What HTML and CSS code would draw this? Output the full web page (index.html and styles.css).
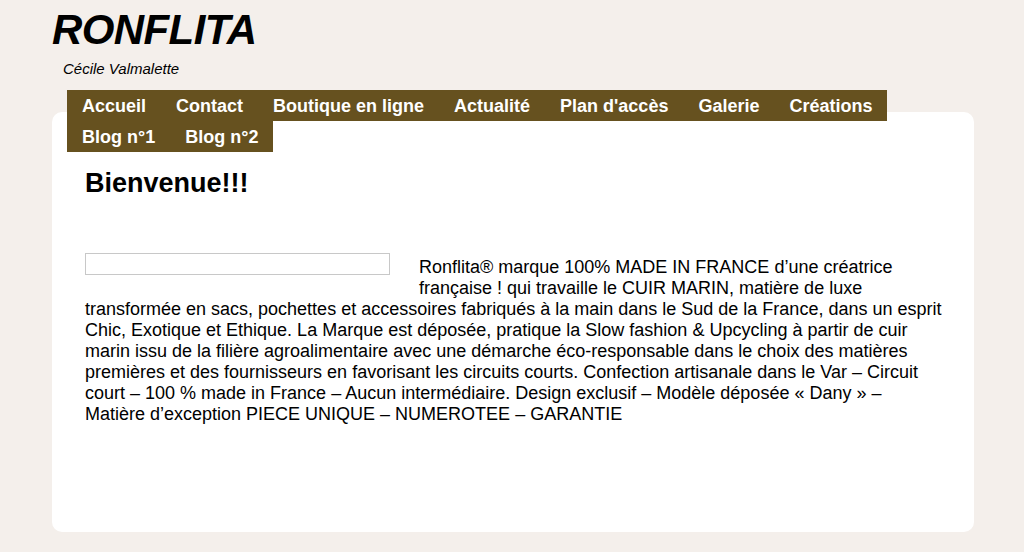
FILE: index.html
```html
<!DOCTYPE html>
<html lang="fr">
<head>
    <meta charset="UTF-8">
    <meta name="viewport" content="width=device-width, initial-scale=1.0">
    <title>Ronflita - Cécile Valmalette</title>
    <link rel="stylesheet" href="styles.css">
</head>
<body>

<div class="page">
    <header class="site-header">
        <h1 class="site-title">RONFLITA</h1>
        <p class="site-tagline">Cécile Valmalette</p>
    </header>

    <div class="card">
        <ul class="nav">
            <li><a href="#">Accueil</a></li>
            <li><a href="#">Contact</a></li>
            <li><a href="#">Boutique en ligne</a></li>
            <li><a href="#">Actualité</a></li>
            <li><a href="#">Plan d'accès</a></li>
            <li><a href="#">Galerie</a></li>
            <li><a href="#">Créations</a></li>
            <li><a href="#">Blog n°1</a></li>
            <li><a href="#">Blog n°2</a></li>
        </ul>

        <h2 class="page-title">Bienvenue!!!</h2>

        <div class="intro">
            <div class="photo"></div>
            <p>Ronflita® marque 100% MADE IN FRANCE d’une créatrice française ! qui travaille le CUIR MARIN, matière de luxe transformée en sacs, pochettes et accessoires fabriqués à la main dans le Sud de la France, dans un esprit Chic, Exotique et Ethique. La Marque est déposée, pratique la Slow fashion &amp; Upcycling à partir de cuir marin issu de la filière agroalimentaire avec une démarche éco-responsable dans le choix des matières premières et des fournisseurs en favorisant les circuits courts. Confection artisanale dans le Var – Circuit court – 100 % made in France – Aucun intermédiaire. Design exclusif – Modèle déposée « Dany » – Matière d’exception PIECE UNIQUE – NUMEROTEE – GARANTIE</p>
        </div>
    </div>
</div>

</body>
</html>
```

FILE: styles.css
```css
body {
    font-family: "Liberation Sans", Arial, sans-serif;
    margin: 0;
    padding: 0;
    background-color: #f4efeb;
    color: #000;
}

.page {
    width: 922px;
    margin: 0 0 0 52px;
    padding-bottom: 21px;
}

.site-header {
    padding-top: 6px;
}

.site-title {
    margin: 0;
    font-size: 42px;
    line-height: 48px;
    font-style: italic;
    font-weight: bold;
    letter-spacing: -0.6px;
}

.site-tagline {
    margin: 6px 0 0 11px;
    font-size: 15px;
    line-height: 17px;
    font-style: italic;
}

.card {
    background: white;
    border-radius: 10px;
    margin-top: 35px;
    padding: 0 28px 107px 33px;
}

.nav {
    list-style: none;
    margin: 0 -18px;
    padding: 0;
    position: relative;
    top: -22px;
    margin-bottom: -22px;
    display: flex;
    flex-wrap: wrap;
    max-width: 892px;
}

.nav li {
    background-color: #66511f;
}

.nav a {
    display: block;
    padding: 6px 15px 4px;
    font-size: 18px;
    line-height: 21px;
    font-weight: bold;
    color: #fff;
    text-decoration: none;
}

.page-title {
    margin: 16px 0 0;
    font-size: 27px;
    line-height: 31px;
}

.intro {
    margin-top: 54px;
}

.photo {
    float: left;
    width: 303px;
    height: 20px;
    border: 1px solid #c8c8c8;
    margin: 0 29px 10px 0;
}

.intro p {
    margin: 0;
    padding-top: 4px;
    font-size: 18px;
    line-height: 21px;
}
```
